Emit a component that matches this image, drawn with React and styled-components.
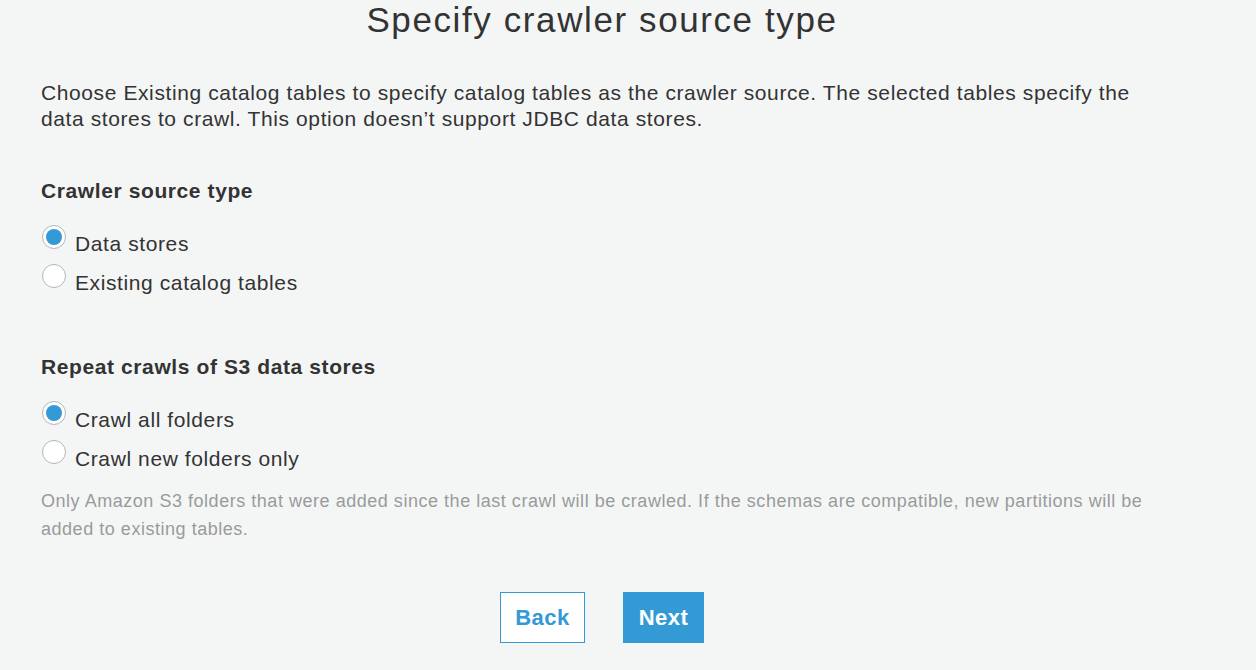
import React, { useState } from "react";
import styled, { createGlobalStyle } from "styled-components";

const Global = createGlobalStyle`
  html, body { margin: 0; padding: 0; background: #f4f6f6; }
  body { font-family: "Liberation Sans", Arial, Helvetica, sans-serif; color: #333; }
`;

const Page = styled.div`
  width: 1122px;
  margin-left: 41px;
  display: flex;
  flex-direction: column;
`;

const Title = styled.h1`
  margin: 0;
  font-size: 35px;
  line-height: 40px;
  font-weight: 400;
  letter-spacing: 1.6px;
  text-align: center;
  color: #333;
`;

const Intro = styled.p`
  margin: 40px 0 0;
  font-size: 21px;
  line-height: 26px;
  letter-spacing: 0.6px;
  color: #333;
`;

const Section = styled.div`
  margin-top: ${(p) => p.$top}px;
  display: flex;
  flex-direction: column;
`;

const Heading = styled.div`
  font-size: 21px;
  line-height: 26px;
  font-weight: 700;
  letter-spacing: 0.6px;
  color: #333;
  margin-bottom: 20px;
`;

const Row = styled.label`
  display: flex;
  align-items: flex-start;
  height: 39px;
  cursor: pointer;
`;

const Circle = styled.span`
  box-sizing: border-box;
  flex: none;
  width: 24px;
  height: 24px;
  margin: 1px 9px 0 1px;
  border-radius: 50%;
  border: 1px solid #b3b5b6;
  background: #fff;
  display: flex;
  align-items: center;
  justify-content: center;
  &::after {
    content: "";
    width: 16px;
    height: 16px;
    border-radius: 50%;
    background: ${(p) => (p.$on ? "#349ad5" : "transparent")};
  }
`;

const Label = styled.span`
  font-size: 21px;
  line-height: 39px;
  letter-spacing: 0.6px;
  color: #333;
`;

const Help = styled.p`
  margin: 9px 0 0;
  font-size: 18px;
  line-height: 28px;
  letter-spacing: 0.53px;
  color: #999b9b;
`;

const Buttons = styled.div`
  margin-top: 49px;
  display: flex;
  justify-content: center;
  gap: 38px;
`;

const Button = styled.button`
  box-sizing: border-box;
  height: 51px;
  width: ${(p) => p.$w}px;
  font-family: "Liberation Sans", Arial, Helvetica, sans-serif;
  font-size: 22px;
  font-weight: 700;
  letter-spacing: 0.5px;
  border: 1px solid #349ad5;
  background: ${(p) => (p.$primary ? "#349ad5" : "#fff")};
  color: ${(p) => (p.$primary ? "#fff" : "#349ad5")};
  cursor: pointer;
  padding: 0;
`;

function RadioGroup({ options, value, onChange }) {
  return options.map((o) => (
    <Row key={o} onClick={() => onChange(o)}>
      <Circle $on={value === o} />
      <Label>{o}</Label>
    </Row>
  ));
}

export default function App() {
  const [source, setSource] = useState("Data stores");
  const [repeat, setRepeat] = useState("Crawl all folders");
  return (
    <Page>
      <Global />
      <Title>Specify crawler source type</Title>
      <Intro>
        Choose Existing catalog tables to specify catalog tables as the crawler source. The
        selected tables specify the data stores to crawl. This option doesn’t support JDBC data
        stores.
      </Intro>
      <Section $top={46}>
        <Heading>Crawler source type</Heading>
        <RadioGroup
          options={["Data stores", "Existing catalog tables"]}
          value={source}
          onChange={setSource}
        />
      </Section>
      <Section $top={52}>
        <Heading>Repeat crawls of S3 data stores</Heading>
        <RadioGroup
          options={["Crawl all folders", "Crawl new folders only"]}
          value={repeat}
          onChange={setRepeat}
        />
        <Help>
          Only Amazon S3 folders that were added since the last crawl will be crawled. If the
          schemas are compatible, new partitions will be added to existing tables.
        </Help>
      </Section>
      <Buttons>
        <Button $w={85}>Back</Button>
        <Button $w={81} $primary>
          Next
        </Button>
      </Buttons>
    </Page>
  );
}
